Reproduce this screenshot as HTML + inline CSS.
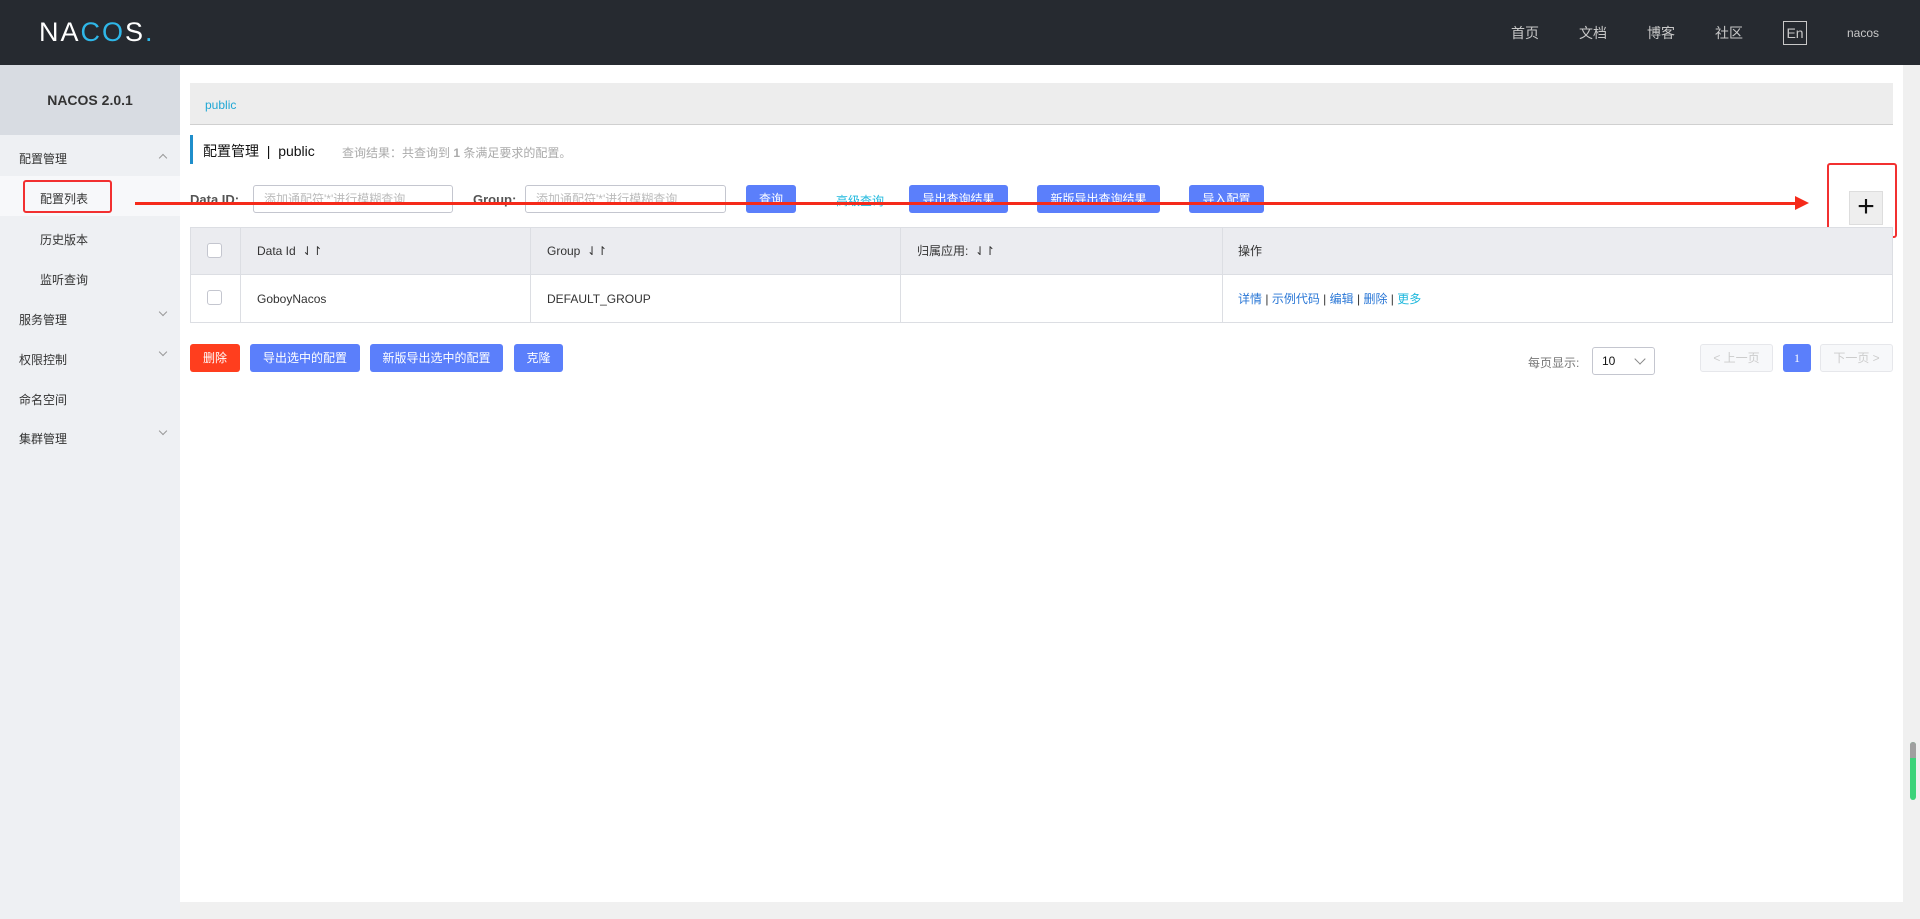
<!DOCTYPE html>
<html><head><meta charset="utf-8"><style>
*{box-sizing:border-box;margin:0;padding:0}
body{width:1920px;height:919px;overflow:hidden;position:relative;background:#fff;font-family:"Liberation Sans","Noto Sans CJK SC",sans-serif;font-size:12px;color:#333}
.a{position:absolute}
.hdr{left:0;top:0;width:1920px;height:65px;background:#262a30}
.nav{color:#c8c8c8;font-size:14px;top:23px}
.side{left:0;top:65px;width:180px;height:854px;background:#eef0f3}
.si{left:19px;font-size:12px;color:#333}
.sub{left:40px}
.chev{left:160px;width:6px;height:6px;border-right:1px solid #999;border-bottom:1px solid #999}
.btn{background:#5b7ffb;color:#fff;border-radius:3px;font-size:12px;text-align:center;line-height:28px}
.inp{border:1px solid #c4c6cf;border-radius:3px;height:28px;color:#bbb;font-size:12px;line-height:26px;padding-left:10px}
.th{top:227px;height:48px;line-height:48px;font-size:12px}
.td{top:275px;height:48px;line-height:48px;font-size:12px}
.cb{width:15px;height:15px;border:1px solid #c4c6cf;border-radius:3px;background:#fff}
.lk{color:#2a77d6}
</style></head><body>
<div class="a hdr"></div>
<div class="a" style="left:39px;top:17px;color:#fff;font-size:27px;font-weight:normal;letter-spacing:2px">NA<span style="color:#2fb7e8">CO</span>S<span style="color:#2fb7e8">.</span></div>
<div class="a nav" style="left:1511px">首页</div>
<div class="a nav" style="left:1579px">文档</div>
<div class="a nav" style="left:1647px">博客</div>
<div class="a nav" style="left:1715px">社区</div>
<div class="a" style="left:1783px;top:21px;width:24px;height:24px;border:1px solid #c8c8c8;color:#c8c8c8;font-size:14px;text-align:center;line-height:22px">En</div>
<div class="a" style="left:1847px;top:26px;color:#c8c8c8;font-size:12px">nacos</div>

<div class="a side"></div>
<div class="a" style="left:0;top:65px;width:180px;height:70px;background:#d8dce2;text-align:center;line-height:70px;font-weight:bold;font-size:14px;color:#333">NACOS 2.0.1</div>
<div class="a si" style="top:150px">配置管理</div><div class="a chev" style="top:155px;transform:rotate(-135deg)"></div>
<div class="a" style="left:0;top:176px;width:180px;height:40px;background:#f7f8fa"></div>
<div class="a si sub" style="top:190px">配置列表</div>
<div class="a" style="left:23px;top:180px;width:89px;height:33px;border:2px solid #f23030;border-radius:3px"></div>
<div class="a si sub" style="top:231px">历史版本</div>
<div class="a si sub" style="top:271px">监听查询</div>
<div class="a si" style="top:311px">服务管理</div><div class="a chev" style="top:309px;transform:rotate(45deg)"></div>
<div class="a si" style="top:351px">权限控制</div><div class="a chev" style="top:349px;transform:rotate(45deg)"></div>
<div class="a si" style="top:391px">命名空间</div>
<div class="a si" style="top:430px">集群管理</div><div class="a chev" style="top:428px;transform:rotate(45deg)"></div>

<div class="a" style="left:190px;top:83px;width:1703px;height:42px;background:#ededed;border-bottom:1px solid #d0d0d0"></div>
<div class="a" style="left:205px;top:98px;color:#1fa7d5;font-size:12px">public</div>
<div class="a" style="left:190px;top:135px;width:3px;height:29px;background:#1f8ecb"></div>
<div class="a" style="left:203px;top:141px;font-size:14px;color:#111">配置管理 &nbsp;|&nbsp; public</div>
<div class="a" style="left:342px;top:144px;font-size:12px;color:#aaa">查询结果：共查询到 <b>1</b> 条满足要求的配置。</div>

<div class="a" style="left:190px;top:192px;font-weight:bold;font-size:13px;color:#555">Data ID:</div>
<div class="a inp" style="left:253px;top:185px;width:200px">添加通配符'*'进行模糊查询</div>
<div class="a" style="left:473px;top:192px;font-weight:bold;font-size:13px;color:#555">Group:</div>
<div class="a inp" style="left:525px;top:185px;width:201px">添加通配符'*'进行模糊查询</div>
<div class="a btn" style="left:746px;top:185px;width:50px">查询</div>
<div class="a" style="left:836px;top:192px;color:#1fb8dd;font-size:12px">高级查询</div>
<div class="a btn" style="left:909px;top:185px;width:99px">导出查询结果</div>
<div class="a btn" style="left:1037px;top:185px;width:123px">新版导出查询结果</div>
<div class="a btn" style="left:1189px;top:185px;width:75px">导入配置</div>
<div class="a" style="left:1849px;top:191px;width:34px;height:34px;background:#eee;border:1px solid #ddd;font-size:30px;line-height:30px;text-align:center;color:#111;font-weight:300">+</div>
<div class="a" style="left:1827px;top:163px;width:70px;height:75px;border:2px solid #f23030;border-radius:3px"></div>

<div class="a" style="left:190px;top:227px;width:1703px;height:96px;border:1px solid #dcdee3"></div>
<div class="a" style="left:191px;top:228px;width:1701px;height:47px;background:#ebecf0;border-bottom:1px solid #dcdee3"></div>
<div class="a" style="left:240px;top:228px;width:1px;height:94px;background:#dcdee3"></div>
<div class="a" style="left:530px;top:228px;width:1px;height:94px;background:#dcdee3"></div>
<div class="a" style="left:900px;top:228px;width:1px;height:94px;background:#dcdee3"></div>
<div class="a" style="left:1222px;top:228px;width:1px;height:94px;background:#dcdee3"></div>
<div class="a cb" style="left:207px;top:243px"></div>
<div class="a cb" style="left:207px;top:290px"></div>
<div class="a th" style="left:257px">Data Id &nbsp;⇃↾</div>
<div class="a th" style="left:547px">Group &nbsp;⇃↾</div>
<div class="a th" style="left:917px">归属应用: &nbsp;⇃↾</div>
<div class="a th" style="left:1238px">操作</div>
<div class="a td" style="left:257px">GoboyNacos</div>
<div class="a td" style="left:547px">DEFAULT_GROUP</div>
<div class="a td" style="left:1238px"><span class="lk">详情</span> | <span class="lk">示例代码</span> | <span class="lk">编辑</span> | <span class="lk">删除</span> | <span style="color:#1fb8dd">更多</span></div>

<div class="a" style="left:135px;top:202px;width:1665px;height:3px;background:#f52a1a"></div>
<div class="a" style="left:1795px;top:196px;width:0;height:0;border-left:14px solid #f52a1a;border-top:7px solid transparent;border-bottom:7px solid transparent"></div>

<div class="a btn" style="left:190px;top:344px;width:50px;background:#ff3e1e">删除</div>
<div class="a btn" style="left:250px;top:344px;width:110px">导出选中的配置</div>
<div class="a btn" style="left:370px;top:344px;width:133px">新版导出选中的配置</div>
<div class="a btn" style="left:514px;top:344px;width:49px">克隆</div>

<div class="a" style="left:1528px;top:354px;color:#777;font-size:12px">每页显示:</div>
<div class="a" style="left:1592px;top:347px;width:63px;height:28px;border:1px solid #c4c6cf;border-radius:3px;line-height:26px;padding-left:9px;font-size:12px;color:#111">10</div>
<div class="a" style="left:1636px;top:355px;width:8px;height:8px;border-right:1px solid #888;border-bottom:1px solid #888;transform:rotate(45deg)"></div>
<div class="a" style="left:1700px;top:344px;width:73px;height:28px;border:1px solid #e6e7eb;background:#f7f8fa;border-radius:3px;color:#ccc;text-align:center;line-height:26px;font-size:12px">&lt; 上一页</div>
<div class="a btn" style="left:1783px;top:344px;width:28px;font-family:'Liberation Serif',serif">1</div>
<div class="a" style="left:1820px;top:344px;width:73px;height:28px;border:1px solid #e6e7eb;background:#f7f8fa;border-radius:3px;color:#ccc;text-align:center;line-height:26px;font-size:12px">下一页 &gt;</div>

<div class="a" style="left:1903px;top:65px;width:17px;height:854px;background:#f0f0f0"></div>
<div class="a" style="left:1910px;top:742px;width:6px;height:58px;border-radius:3px;background:#3bd37a"></div>
<div class="a" style="left:1910px;top:742px;width:6px;height:16px;border-radius:3px 3px 0 0;background:#a0a0a0"></div>
<div class="a" style="left:180px;top:902px;width:1723px;height:17px;background:#f0f0f0"></div>
</body></html>
